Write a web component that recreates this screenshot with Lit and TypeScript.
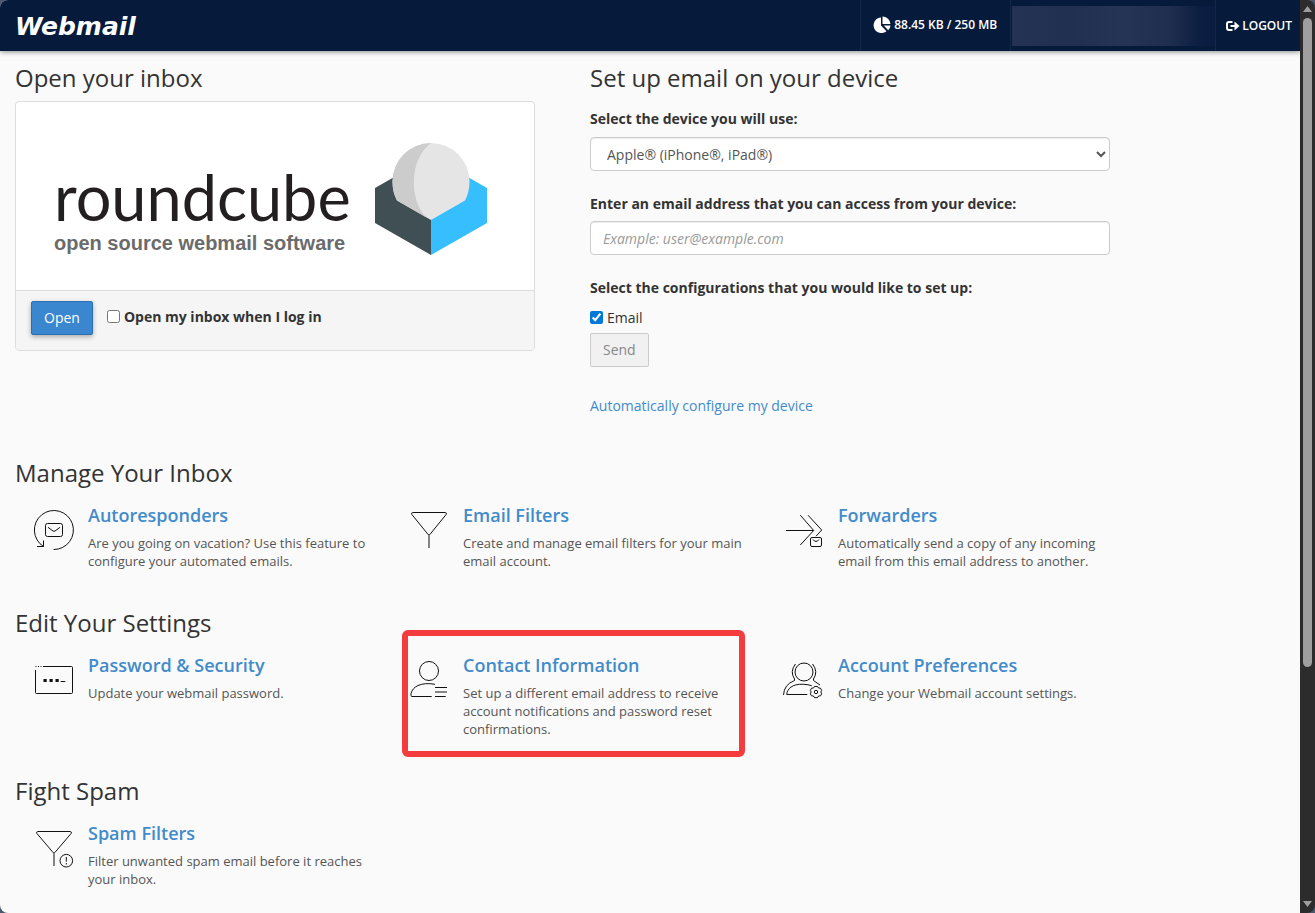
import { LitElement, html, css, svg } from "lit";
import { customElement, property } from "lit/decorators.js";

const icons: Record<string, unknown> = {
  autoresponders: svg`
    <path d="M21.700 41.500A19.500 19.500 0 1 0 11.500 38.500M11.500 32.500V38.500H5"/>
    <rect x="13.500" y="15.500" width="17" height="13" rx="2"/>
    <path d="M16 19.300L21 23Q22 23.700 23 23L28 19.300"/>`,
  filters: svg`
    <path d="M5.700 4.500H38.300Q40 4.700 39.200 6.400L22.800 26.600Q22 27.500 21.200 26.600L4.800 6.400Q4 4.700 5.700 4.500ZM22 27.300V40"/>`,
  forwarders: svg`
    <path d="M4 22.500H31.700M18.300 7.200L31.700 22.500L18.300 37M26 7.200L39.700 22L34 28.200"/>
    <rect x="28.500" y="29.500" width="11" height="9" rx="1.500"/>
    <path d="M31 31.500Q34 35.500 37 31.500"/>`,
  password: svg`
    <path d="M12 8.500H39.500Q40.500 8.500 40.500 9.500V34.500Q40.500 35.500 39.500 35.500H4.500Q3.500 35.500 3.500 34.500V12"/>
    <path d="M3.500 8.500H12" stroke-dasharray="1 1.500"/>
    <path d="M11.500 22.500H14.700M17.500 22.500H20.700M23.500 22.500H26.700" stroke-width="3"/>
    <path d="M28.700 23.500H33.300"/>`,
  contact: svg`
    <circle cx="22" cy="13" r="9.500"/>
    <path d="M28 26.300Q18 24.500 11 27.500Q5 30.500 4 35.700V37.500Q4 38.500 5 38.500H24.700M28 29.500H40M28 34H40M28 38.500H38.700"/>`,
  preferences: svg`
    <circle cx="22" cy="14" r="9"/>
    <path d="M13.500 6Q7.500 13.500 12.500 21V22.500Q2 26.500 1.500 37M30.500 6Q36.500 13.500 31.500 21V22.500L38 27"/>
    <path d="M25.300 36.500H4.700C5 31 10.500 25.500 21.300 26.300Q26.500 26.500 29.700 27.700"/>
    <path d="M32.500 28.500H35.500L36.500 30L38.500 30.200L39.700 32.500L38.800 34L39.700 35.800L38.500 37.800L36.500 38L35.500 39.700H32.500L31.500 38L29.500 37.800L28.300 35.800L29.200 34L28.300 32.500L29.500 30.200L31.500 30Z"/>
    <circle cx="34" cy="34" r="1.700"/>`,
  spam: svg`
    <path d="M5.700 5.500H38.300Q40 5.700 39.200 7.400L22.800 26.600Q22 27.500 21.200 26.600L4.800 7.400Q4 5.700 5.700 5.500ZM22 27.300V40"/>
    <circle cx="34.300" cy="34.700" r="6.300"/>
    <path d="M34.300 31V35.700M34.300 37V38.500"/>`,
};

interface Feature {
  icon: string;
  title: string;
  text: string;
  marked?: boolean;
}

const sections: { heading: string; items: Feature[] }[] = [
  {
    heading: "Manage Your Inbox",
    items: [
      { icon: "autoresponders", title: "Autoresponders", text: "Are you going on vacation? Use this feature to configure your automated emails." },
      { icon: "filters", title: "Email Filters", text: "Create and manage email filters for your main email account." },
      { icon: "forwarders", title: "Forwarders", text: "Automatically send a copy of any incoming email from this email address to another." },
    ],
  },
  {
    heading: "Edit Your Settings",
    items: [
      { icon: "password", title: "Password & Security", text: "Update your webmail password." },
      { icon: "contact", title: "Contact Information", text: "Set up a different email address to receive account notifications and password reset confirmations.", marked: true },
      { icon: "preferences", title: "Account Preferences", text: "Change your Webmail account settings." },
    ],
  },
  {
    heading: "Fight Spam",
    items: [{ icon: "spam", title: "Spam Filters", text: "Filter unwanted spam email before it reaches your inbox." }],
  },
];

@customElement("feature-item")
class FeatureItem extends LitElement {
  @property({ attribute: false }) item!: Feature;

  static styles = css`
    :host {
      display: flex;
      position: relative;
      gap: 12px;
      padding: 0 15px 0 17px;
    }
    .icon {
      flex: none;
      width: 44px;
      height: 44px;
      margin-top: 3px;
      fill: none;
      stroke: #111;
      stroke-width: 1;
    }
    .title {
      display: block;
      font-size: 18px;
      line-height: 20px;
      font-weight: 600;
      color: #428bca;
      text-decoration: none;
    }
    .text {
      margin: 9px 0 0;
      font-size: 13px;
      line-height: 18px;
      color: #555;
    }
    .mark {
      position: absolute;
      inset: -25px 20px -19px 12px;
      border: 6px solid #f43b3d;
      border-radius: 6px;
      pointer-events: none;
    }
  `;

  render() {
    return html`
      <svg class="icon" viewBox="0 0 44 44" aria-hidden="true">${icons[this.item.icon]}</svg>
      <div>
        <a class="title" href="#">${this.item.title}</a>
        <p class="text">${this.item.text}</p>
      </div>
      ${this.item.marked ? html`<div class="mark"></div>` : null}
    `;
  }
}

@customElement("app-root")
class AppRoot extends LitElement {
  static styles = css`
    :host {
      display: block;
      background: #4b586c;
      font-family: "Open Sans", "Noto Sans", sans-serif;
      font-size: 14px;
      line-height: 20px;
      color: #333;
    }
    * {
      box-sizing: border-box;
    }
    .window {
      display: flex;
      min-height: 100vh;
      border-radius: 8px;
      overflow: hidden;
    }
    .page {
      flex: 1;
      min-width: 0;
      background: #fafafa;
    }
    .bar {
      display: flex;
      justify-content: space-between;
      height: 51px;
      padding-left: 15px;
      background: #061a3c;
      box-shadow: 0 1px 5px rgba(0, 0, 0, 0.45);
      color: #fff;
    }
    .brand {
      align-self: center;
      padding-top: 3px;
      font: italic bold 25px/30px "DejaVu Sans", sans-serif;
      color: #fff;
      text-decoration: none;
    }
    .tools {
      display: flex;
      font-size: 12px;
    }
    .tool {
      display: flex;
      align-items: center;
      gap: 3px;
      border-left: 1px solid #14264a;
      color: #fff;
      text-decoration: none;
    }
    .quota {
      padding: 0 13px 2px 12px;
      font-weight: 600;
    }
    .logout {
      padding: 0 8px 0 10px;
      font-weight: 600;
      gap: 2px;
    }
    .pie {
      width: 18px;
      height: 18px;
      fill: #fff;
    }
    .exit {
      width: 14px;
      height: 12px;
      fill: none;
      stroke: #fff;
      stroke-width: 2;
    }
    .account {
      width: 205px;
      padding: 6px 0 5px 1px;
      border-left: 1px solid #14264a;
    }
    .account-name {
      height: 100%;
      background: linear-gradient(90deg, #243354 0%, #213050 30%, #253454 55%, #1f2e4e 78%, #0c1e42 92%, #0a1c3f 100%);
    }
    .content {
      max-width: 1155px;
      padding: 14px 15px 24px;
    }
    .top {
      display: grid;
      grid-template-columns: 1fr 1fr;
      gap: 55px;
      padding-right: 30px;
      margin-bottom: 44px;
    }
    h2 {
      margin: 0;
      font-size: 24px;
      line-height: 26px;
      font-weight: 400;
    }
    .card {
      margin-top: 10px;
      border: 1px solid #ddd;
      border-radius: 4px;
      background: #fff;
      overflow: hidden;
    }
    .logo {
      display: flex;
      gap: 24px;
      padding: 41px 0 35px 38px;
    }
    .wordmark {
      width: 297px;
      padding-top: 23px;
      white-space: nowrap;
    }
    .name {
      margin-bottom: 3px;
      font: 400 63px/62px Lato, sans-serif;
      color: #231f20;
    }
    .tagline {
      font: bold 20px/24px "Liberation Sans", Arial, sans-serif;
      color: #6b6b6b;
    }
    .cube {
      width: 112px;
      height: 112px;
    }
    .card-foot {
      display: flex;
      align-items: flex-start;
      gap: 14px;
      padding: 10px 15px 15px;
      border-top: 1px solid #ddd;
      background: #f5f5f5;
    }
    .btn {
      height: 34px;
      padding: 6px 12px;
      border: 1px solid #ccc;
      border-radius: 2px;
      font: inherit;
    }
    .primary {
      background: #3a87cf;
      border-color: #2b6fb0;
      color: #fff;
      box-shadow: 0 2px 5px rgba(0, 0, 0, 0.3);
    }
    .send {
      display: block;
      margin-top: 5px;
      background: #f1f1f1;
      color: #888;
    }
    .check {
      display: flex;
      align-items: center;
      gap: 4px;
    }
    .check input {
      width: 13px;
      height: 13px;
      margin: 0 0 2px;
      accent-color: #0078d7;
    }
    .open-check {
      margin-top: 6px;
      font-weight: 700;
    }
    .label {
      display: block;
      margin: 23px 0 7px;
      font-weight: 700;
    }
    .first {
      margin: 18px 0 8px;
    }
    .field {
      display: block;
      width: 100%;
      height: 34px;
      padding: 6px 12px;
      border: 1px solid #ccc;
      border-radius: 4px;
      background: #fff;
      box-shadow: inset 0 1px 1px rgba(0, 0, 0, 0.075);
      font: inherit;
      color: #555;
    }
    select.field {
      padding-right: 0;
    }
    .field::placeholder {
      color: #999;
      font-style: italic;
      opacity: 1;
    }
    fieldset {
      min-width: 0;
      margin: 23px 0 0;
      padding: 0;
      border: 0;
    }
    legend {
      margin-bottom: 10px;
      padding: 0;
      font-weight: 700;
    }
    .auto {
      display: block;
      width: fit-content;
      margin-top: 29px;
      color: #428bca;
      text-decoration: none;
    }
    .section {
      margin-bottom: 40px;
    }
    .section:last-child {
      margin-bottom: 0;
    }
    .features {
      display: grid;
      grid-template-columns: repeat(3, 1fr);
      margin-top: 19px;
    }
    .scroll {
      display: flex;
      flex: none;
      flex-direction: column;
      align-items: center;
      justify-content: space-between;
      width: 15px;
      padding: 6px 0;
      background: #2c2c2c;
    }
    .track {
      flex: 1;
      margin: 6px 0;
    }
    .thumb {
      width: 9px;
      height: 74%;
      border-radius: 5px;
      background: #9f9f9f;
    }
    .arrow {
      width: 9px;
      height: 6px;
      fill: #9f9f9f;
    }
  `;

  render() {
    return html`
      <div class="window">
        <div class="page">
          <header class="bar">
            <a class="brand" href="#">Webmail</a>
            <div class="tools">
              <div class="tool quota">
                <svg class="pie" viewBox="0 0 18 18" aria-hidden="true">
                  <path d="M8 1.500V9.500L13.500 15.200A7.800 7.800 0 1 1 8 1.500Z" />
                  <path d="M9.500 0.500A8 8 0 0 1 17.500 8H9.500Z" />
                  <path d="M10.800 9.500H17.500A7.500 7.500 0 0 1 15.200 14.300Z" />
                </svg>
                <span>88.45 KB / 250 MB</span>
              </div>
              <div class="account"><div class="account-name"></div></div>
              <a class="tool logout" href="#">
                <svg class="exit" viewBox="0 0 14 12" aria-hidden="true">
                  <path d="M6.500 2H3Q1 2 1 4V8Q1 10 3 10H6.500M4.500 6H10" />
                  <path d="M8.500 1.500L13.500 6L8.500 10.500Z" fill="#fff" stroke="none" />
                </svg>
                <span>LOGOUT</span>
              </a>
            </div>
          </header>
          <main class="content">
            <div class="top">
              <section>
                <h2>Open your inbox</h2>
                <div class="card">
                  <div class="logo">
                    <div class="wordmark">
                      <div class="name">roundcube</div>
                      <div class="tagline">open source webmail software</div>
                    </div>
                    <svg class="cube" viewBox="375 143 112 112" aria-hidden="true">
                      <path fill="#404f54" d="M375 188L396 176V198L431 219V255L375 223Z" />
                      <path fill="#37beff" d="M487 188L466 176V198L431 219V255L487 223Z" />
                      <path fill="#e5e5e5" d="M431 220L465 200.500Q469.500 192 469.500 181.500A38.500 38.500 0 0 0 392.500 181.500Q392.500 192 397 200.500Z" />
                      <path fill="#ccc" d="M431 143A38.500 38.500 0 0 0 392.500 181.500Q392.500 192 397 200.500L426 217.200C409.500 200 408.500 160 431 143Z" />
                    </svg>
                  </div>
                  <div class="card-foot">
                    <button class="btn primary" type="button">Open</button>
                    <label class="check open-check"><input type="checkbox" />Open my inbox when I log in</label>
                  </div>
                </div>
              </section>
              <section>
                <h2>Set up email on your device</h2>
                <label class="label first" for="device">Select the device you will use:</label>
                <select class="field" id="device">
                  <option>Apple® (iPhone®, iPad®)</option>
                </select>
                <label class="label" for="email">Enter an email address that you can access from your device:</label>
                <input class="field" id="email" type="email" placeholder="Example: user@example.com" />
                <fieldset>
                  <legend>Select the configurations that you would like to set up:</legend>
                  <label class="check"><input type="checkbox" checked />Email</label>
                </fieldset>
                <button class="btn send" type="button" disabled>Send</button>
                <a class="auto" href="#">Automatically configure my device</a>
              </section>
            </div>
            ${sections.map(
              (s) => html`
                <section class="section">
                  <h2>${s.heading}</h2>
                  <div class="features">
                    ${s.items.map((item) => html`<feature-item .item=${item}></feature-item>`)}
                  </div>
                </section>
              `,
            )}
          </main>
        </div>
        <div class="scroll" aria-hidden="true">
          <svg class="arrow" viewBox="0 0 9 6"><path d="M4.500 0L9 6H0Z" /></svg>
          <div class="track"><div class="thumb"></div></div>
          <svg class="arrow" viewBox="0 0 9 6"><path d="M4.500 6L0 0H9Z" /></svg>
        </div>
      </div>
    `;
  }
}
